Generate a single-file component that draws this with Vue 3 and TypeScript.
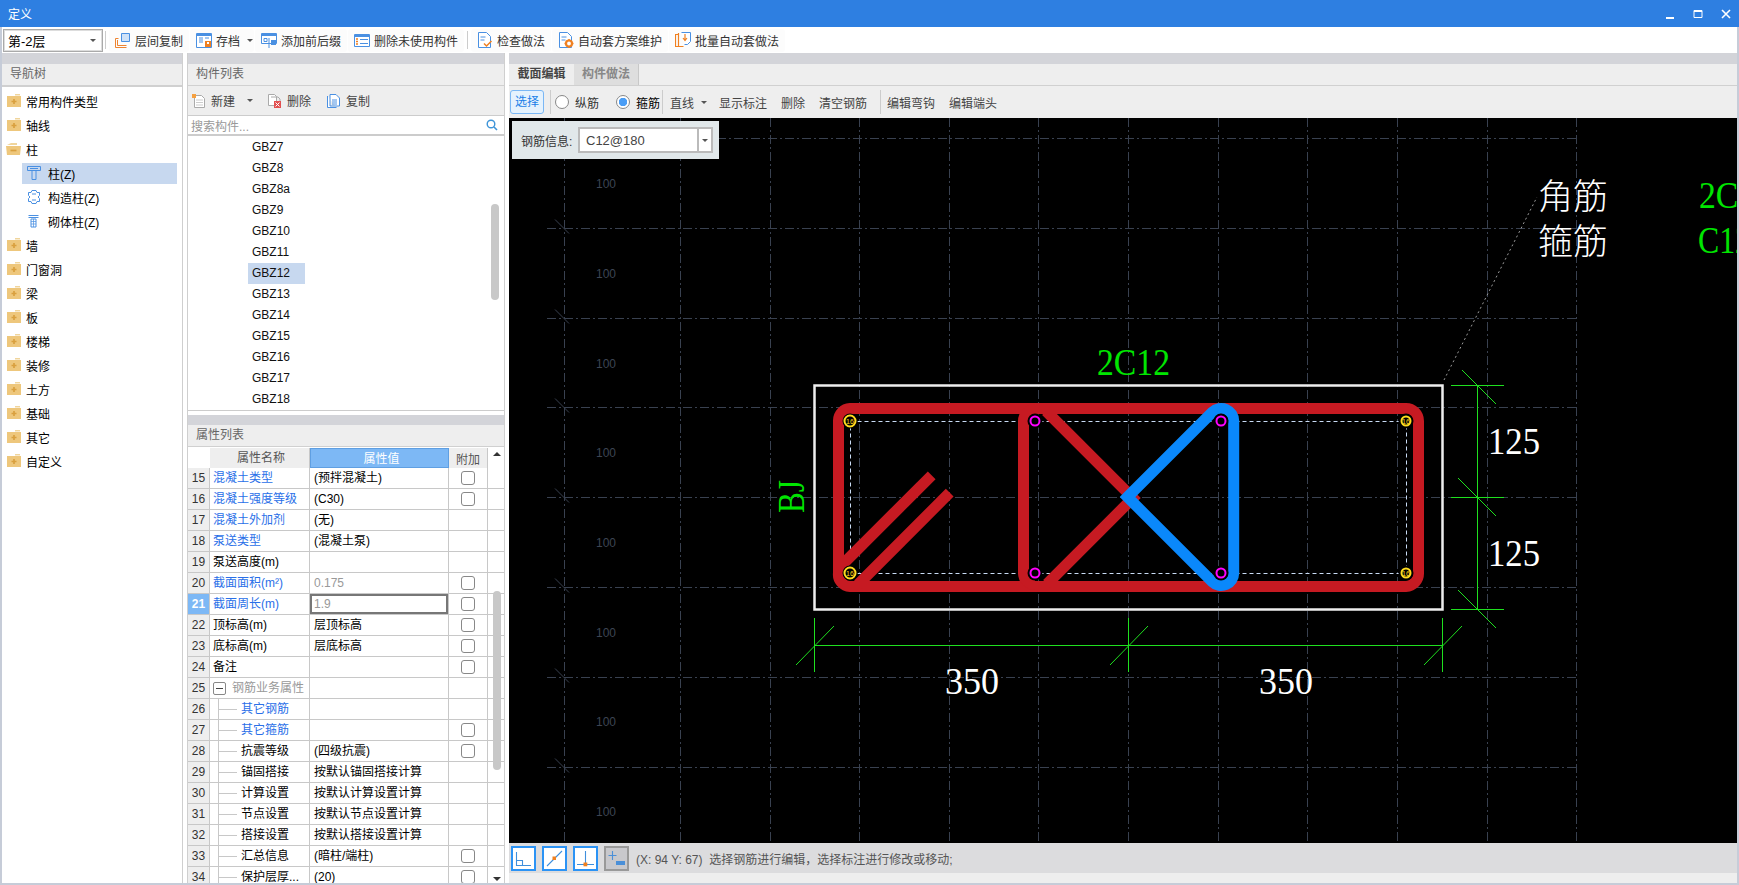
<template>
  <div class="app">
    <!-- Title bar -->
    <header class="titlebar">
      <span class="title">定义</span>
      <div class="win-ctrl">
        <svg width="12" height="12" viewBox="0 0 12 12"><rect x="2" y="9" width="8" height="2" fill="#fff" /></svg>
        <svg width="12" height="12" viewBox="0 0 12 12"><path d="M2 2.500h8v7H2z" fill="none" stroke="#fff" stroke-width="1" /><rect x="2" y="2" width="8" height="2" fill="#fff" /></svg>
        <svg width="12" height="12" viewBox="0 0 12 12"><path d="M2 2l8 8M10 2l-8 8" stroke="#fff" stroke-width="1.600" /></svg>
      </div>
    </header>

    <div class="main">
      <!-- Top toolbar -->
      <div class="toolbar">
        <div class="floor-select">
          <span>第-2层</span>
          <i class="caret"></i>
        </div>
        <span class="tb-sep first"></span>
        <button class="tb-btn">
          <svg class="icon" viewBox="0 0 16 16"><path d="M6.500 1.500h8v8h-8z" fill="#cfe2f8" stroke="#4a90e2" /><path d="M.5 15.500v-9h3M2.500 13.500h9M.5 15.500h11M2.500 13.500V8" fill="none" stroke="#ee8430" /></svg>
          层间复制
        </button>
        <button class="tb-btn with-caret">
          <svg class="icon" viewBox="0 0 16 16"><path d="M.5 1.500h15v14H.5z" fill="#fff" stroke="#4a90e2" /><path d="M1 2h14v2H1z" fill="#4a90e2" /><path d="M3 6h4M3 8h4M3 10h4M9 6h4" stroke="#4a90e2" /><rect x="9" y="9" width="6" height="6" fill="#f08020" /><rect x="11" y="10" width="2" height="2" fill="#fff" /></svg>
          存档
          <i class="caret"></i>
        </button>
        <button class="tb-btn">
          <svg class="icon" viewBox="0 0 16 16"><path d="M.5 1.500h15v10H.5z" fill="#fff" stroke="#4a90e2" /><path d="M1 2h14v2H1z" fill="#4a90e2" /><path d="M3 6.500h3v3H3z" fill="#fff" stroke="#4a90e2" /><rect x="10" y="8" width="5" height="5" fill="#4a90e2" /><path d="M8 6v10" stroke="#4a90e2" /></svg>
          添加前后缀
        </button>
        <button class="tb-btn">
          <svg class="icon" viewBox="0 0 16 16"><path d="M.5 2.500h15v12H.5z" fill="#fff" stroke="#4a90e2" /><path d="M1 3h14v2H1z" fill="#4a90e2" /><path d="M2 7h2M2 9.500h2M2 12h2" stroke="#f08020" stroke-width="1.500" /><path d="M6 7.500h8M6 11.500h8" stroke="#4a90e2" /></svg>
          删除未使用构件
        </button>
        <span class="tb-sep"></span>
        <button class="tb-btn">
          <svg class="icon" viewBox="0 0 16 16"><path d="M1.500.5h8l4 4v11h-12z" fill="#fff" stroke="#4a90e2" /><path d="M3.500 5h5M3.500 8h4" stroke="#4a90e2" /><path d="M7 11.500l2.500 2.500 5-5" fill="none" stroke="#f08020" stroke-width="1.500" /></svg>
          检查做法
        </button>
        <button class="tb-btn">
          <svg class="icon" viewBox="0 0 16 16"><path d="M1.500.5h8l4 4v11h-12z" fill="#fff" stroke="#4a90e2" /><path d="M3.500 5h5M3.500 8h4" stroke="#4a90e2" /><circle cx="11" cy="11.500" r="3" fill="#fff" stroke="#f08020" stroke-width="2.200" /><path d="M11 7v2M11 14v2M6.500 11.500h2M13.500 11.500h2" stroke="#f08020" stroke-width="1.500" /></svg>
          自动套方案维护
        </button>
        <button class="tb-btn">
          <svg class="icon" viewBox="0 0 16 16"><path d="M3.500 2.500H.5v12h3M3.500 1v13.500h5" fill="none" stroke="#f08020" stroke-width="1.200" /><path d="M6.500.5h9v9l-3 3h-3" fill="#fff" stroke="#4a90e2" /><path d="M10 2v6M8 6l2 2.500L12 6" fill="none" stroke="#f08020" stroke-width="1.200" /></svg>
          批量自动套做法
        </button>
      </div>

      <div class="panels">
        <!-- Navigation tree -->
        <aside class="nav">
          <div class="strip"></div>
          <div class="panel-head">导航树</div>
          <ul class="tree">
            <li v-for="item in navItems" :key="item.label" class="tree-row" :class="{ child: item.child, selected: item.selected }">
              <svg v-if="item.icon === 'closed'" class="folder" viewBox="0 0 14 14"><path d="M8 0h5v1.500H8z" fill="#f0d59c" /><rect y="2" width="14" height="11" fill="#eec77c" /><path d="M4.500 7.500h5M7 5v5" stroke="#d9a03f" stroke-width="1.700" /></svg>
              <svg v-else-if="item.icon === 'open'" class="folder open" viewBox="0 0 16 14"><path d="M1 3l4-2h6v2z" fill="#f0d59c" /><path d="M0 4h15l-1 9H1z" fill="#eec77c" /><path d="M4.500 8.500h6" stroke="#d9a03f" stroke-width="1.700" /></svg>
              <svg v-else-if="item.icon === 'col'" class="leaf" viewBox="0 0 14 14"><path d="M.5.5h13v4h-13zM3 2.500h8M5 4.500v9h4v-9" fill="none" stroke="#4a90e2" /></svg>
              <svg v-else-if="item.icon === 'gz'" class="leaf" viewBox="0 0 14 14"><path d="M5 .5h4l1 2h2.500v3L11 7l1.500 1.500v3H10l-1 2H5l-1-2H1.500v-3L3 7 1.500 5.500v-3H4z" fill="none" stroke="#4a90e2" /><path d="M5 4h4M5 10h4" stroke="#4a90e2" /></svg>
              <svg v-else-if="item.icon === 'qt'" class="leaf" viewBox="0 0 14 14"><path d="M1.500 1.500h10M1.500 3.500h10M4 5h5v8H4z" fill="none" stroke="#4a90e2" /><path d="M4 7.500h5M4 10h5M6.500 5v8" stroke="#4a90e2" stroke-width=".7" /></svg>
              <span>{{ item.label }}</span>
            </li>
          </ul>
        </aside>

        <!-- Component list + property list -->
        <section class="middle">
          <div class="strip"></div>
          <div class="panel-head">构件列表</div>
          <div class="list-tools">
            <span class="lt-btn new">
              <svg class="lt-icon" viewBox="0 0 14 14"><path d="M2.500 1.500h7l3 3v9h-10z" fill="#fff" stroke="#aaa" /><path d="M4 6h7M4 8.500h7M4 11h7" stroke="#ccc" /><rect width="4" height="4" fill="#f5a040" /></svg>
              新建<i class="caret btn-caret"></i>
            </span>
            <span class="lt-btn del">
              <svg class="lt-icon" viewBox="0 0 14 14"><path d="M.5.5h6l2 2v9h-8z" fill="#fff" stroke="#aaa" /><path d="M3 3h7l2 2v3" fill="none" stroke="#aaa" /><rect x="6" y="7" width="7" height="7" fill="#e25050" /><path d="M7.500 8.500l4 4M11.500 8.500l-4 4" stroke="#fff" /></svg>
              删除
            </span>
            <span class="lt-btn">
              <svg class="lt-icon" viewBox="0 0 14 14"><path d="M.5 2v11.500h9M3 .5h6l3.500 3.500v8H3z" fill="#fff" stroke="#4a90e2" /><path d="M5 6h5M5 8h5M5 10h5" stroke="#4a90e2" /></svg>
              复制
            </span>
          </div>
          <div class="search">
            <span>搜索构件...</span>
            <svg width="12" height="12" viewBox="0 0 12 12"><circle cx="5" cy="5" r="3.800" fill="none" stroke="#3d94d8" stroke-width="1.400" /><path d="M8 8l3 3" stroke="#3d94d8" stroke-width="1.600" /></svg>
          </div>
          <div class="comp-list">
            <div v-for="name in components" :key="name" class="comp-row">
              <span :class="{ picked: name === 'GBZ12' }">{{ name }}</span>
            </div>
            <span class="list-thumb"></span>
          </div>

          <div class="strip second"></div>
          <div class="panel-head">属性列表</div>
          <div class="prop-table">
            <div class="prop-head">
              <span class="cell-no blank"></span>
              <span class="cell-name head">属性名称</span>
              <span class="cell-val head active">属性值</span>
              <span class="cell-add head">附加</span>
            </div>
            <div v-for="row in props" :key="row.no" class="prop-row" :class="{ current: row.no === 21 }">
              <span class="cell-no">{{ row.no }}</span>
              <span class="cell-name" :class="{ link: row.link, sub: row.sub, group: row.group }">
                <i v-if="row.group" class="minus"></i>
                <i v-if="row.sub" class="branch"></i>
                {{ row.name }}
              </span>
              <span class="cell-val" :class="{ muted: row.muted }">{{ row.value }}</span>
              <span class="cell-add"><i v-if="row.check" class="check"></i></span>
            </div>
            <div class="prop-scroll">
              <i class="arrow up"></i>
              <span class="prop-thumb"></span>
              <i class="arrow down"></i>
            </div>
          </div>
        </section>

        <!-- Section editor -->
        <section class="editor">
          <div class="strip"></div>
          <div class="tabs">
            <span class="tab active">截面编辑</span>
            <span class="tab">构件做法</span>
          </div>
          <div class="edit-tools">
            <span class="select-btn">选择</span>
            <span class="et-sep"></span>
            <span class="radio"></span><span class="et-label">纵筋</span>
            <span class="radio on"></span><span class="et-label tight">箍筋</span>
            <span class="et-sep near"></span>
            <span class="et-item line">直线<i class="caret btn-caret"></i></span>
            <span class="et-item">显示标注</span>
            <span class="et-item">删除</span>
            <span class="et-item">清空钢筋</span>
            <span class="et-sep wide"></span>
            <span class="et-item">编辑弯钩</span>
            <span class="et-item">编辑端头</span>
          </div>

          <div class="canvas">
            <svg class="drawing" width="1229" height="725" viewBox="509 118 1229 725">
              <!-- grid -->
              <g stroke="#394150" stroke-width="1" stroke-dasharray="9 3 2 3" fill="none">
                <line v-for="x in gridX" :key="'x' + x" :x1="x" y1="118" :x2="x" y2="843" />
                <line v-for="y in gridY" :key="'y' + y" x1="547" :y1="y" x2="1577" :y2="y" />
              </g>
              <g stroke="#394150" stroke-width="1">
                <line v-for="y in gridY.slice(1)" :key="'t' + y" x1="555" :y1="y - 9" x2="569" :y2="y + 5" />
              </g>
              <text v-for="y in gridLabels" :key="'l' + y" x="606" :y="y + 5" class="grid-label">100</text>

              <!-- section outline -->
              <rect x="814.500" y="385.500" width="628" height="224" fill="none" stroke="#eeeeee" stroke-width="2.500" />

              <!-- inner dashed line -->
              <rect x="850.500" y="421.500" width="556" height="152" fill="none" stroke="#c9dcf5" stroke-dasharray="4 3" />

              <!-- stirrups -->
              <g fill="none" stroke="#c61a22" stroke-width="11">
                <path d="M850 408.500H1406A12.500 12.500 0 0 1 1418.500 421V573A13 13 0 0 1 1406 586.500H850A12 12 0 0 1 838.500 573V421A12 12 0 0 1 850 408.500Z" />
                <path d="M931.700 475.300L838 569" />
                <path d="M949.700 492.700L858 584.500" />
                <path d="M1023.500 573V421A11.500 11.500 0 0 1 1035 409.500" />
                <path d="M1023.500 573A11.500 11.500 0 0 0 1035 584.500" />
                <path d="M1046 411L1133 498L1047 584" />
              </g>
              <path d="M1127.500 497L1212.500 412A12.500 12.500 0 0 1 1233.700 421V573A12.500 12.500 0 0 1 1212.500 582Z" fill="none" stroke="#0a88fb" stroke-width="11" stroke-linejoin="miter" stroke-miterlimit="4" />

              <!-- rebars -->
              <g v-for="b in rebars" :key="b.x + '-' + b.y">
                <circle :cx="b.x" :cy="b.y" r="7.500" fill="#000" />
                <circle :cx="b.x" :cy="b.y" :r="b.r" fill="#000" :stroke="b.color" stroke-width="2" />
                <text :x="b.x" :y="b.y + 2.500" class="bar-text" :fill="b.color">{{ b.text }}</text>
              </g>

              <!-- dimensions -->
              <g stroke="#1fe01f" stroke-width="1" fill="none">
                <path d="M1477.500 385V609M1451 385.500H1504M1451 497.500H1504M1451 609.500H1504" />
                <path d="M1462 370L1496 404M1458 478L1496 516M1458 590L1496 628" />
                <path d="M814 645.500H1442M814.500 618V672M1128.500 618V672M1442.500 618V672" />
                <path d="M796 665L834 626M1110 665L1148 626M1424 665L1462 626" />
              </g>

              <!-- leader -->
              <line x1="1444" y1="380" x2="1537" y2="197" stroke="#9a9a9a" stroke-dasharray="2 3" />

              <text x="1097" y="375" class="cad green" textLength="73" lengthAdjust="spacingAndGlyphs">2C12</text>
              <text transform="translate(804 513) rotate(-90)" class="cad green" textLength="33" lengthAdjust="spacingAndGlyphs">BJ</text>
              <text x="945" y="694" class="cad white" textLength="54" lengthAdjust="spacingAndGlyphs">350</text>
              <text x="1259" y="694" class="cad white" textLength="54" lengthAdjust="spacingAndGlyphs">350</text>
              <text x="1488" y="454" class="cad white" textLength="52" lengthAdjust="spacingAndGlyphs">125</text>
              <text x="1488" y="566" class="cad white" textLength="52" lengthAdjust="spacingAndGlyphs">125</text>
              <text x="1538" y="209" class="cad-cn">角筋</text>
              <text x="1538" y="254" class="cad-cn">箍筋</text>
              <text x="1699" y="208" class="cad green" textLength="73" lengthAdjust="spacingAndGlyphs">2C12</text>
              <text x="1698" y="253" class="cad green" textLength="130" lengthAdjust="spacingAndGlyphs">C12@180</text>
            </svg>

            <!-- rebar info box sits over the drawing -->
            <div class="info-box">
              <span class="info-label">钢筋信息:</span>
              <div class="combo">
                <span class="combo-text">C12@180</span>
                <span class="combo-arrow"><i class="caret"></i></span>
              </div>
            </div>
          </div>

          <div class="status">
            <span class="snap">
              <svg viewBox="0 0 21 21"><path d="M3.500 4v13.500H18M3.500 12.500h6v5" fill="none" stroke="#3f8fdc" stroke-width="1.100" /></svg>
            </span>
            <span class="snap">
              <svg viewBox="0 0 21 21"><path d="M3 18L18 3" stroke="#3f8fdc" stroke-width="1.100" /><rect x="8.500" y="8.500" width="3.500" height="3.500" fill="#f08020" /></svg>
            </span>
            <span class="snap">
              <svg viewBox="0 0 21 21"><path d="M2 16.500h17M10.500 3v13" stroke="#3f8fdc" stroke-width="1.100" /><rect x="8.500" y="14.500" width="3.800" height="3.800" fill="#f08020" /></svg>
            </span>
            <span class="snap off">
              <svg viewBox="0 0 21 21"><path d="M6.500 3v9M2.500 7.500h8" stroke="#4a8fd8" stroke-width="1.100" /><rect x="10" y="13" width="9" height="4" fill="#4a8fd8" /></svg>
            </span>
            <span class="status-text">(X: 94 Y: 67)&nbsp; 选择钢筋进行编辑，选择标注进行修改或移动;</span>
          </div>
          <div class="foot"></div>
        </section>
      </div>
    </div>
  </div>
</template>

<script setup lang="ts">
interface NavItem {
  label: string
  icon: string
  child?: boolean
  selected?: boolean
}

interface PropRow {
  no: number
  name: string
  value?: string
  link?: boolean
  check?: boolean
  muted?: boolean
  sub?: boolean
  group?: boolean
}

const navItems: NavItem[] = [
  { label: '常用构件类型', icon: 'closed' },
  { label: '轴线', icon: 'closed' },
  { label: '柱', icon: 'open' },
  { label: '柱(Z)', icon: 'col', child: true, selected: true },
  { label: '构造柱(Z)', icon: 'gz', child: true },
  { label: '砌体柱(Z)', icon: 'qt', child: true },
  { label: '墙', icon: 'closed' },
  { label: '门窗洞', icon: 'closed' },
  { label: '梁', icon: 'closed' },
  { label: '板', icon: 'closed' },
  { label: '楼梯', icon: 'closed' },
  { label: '装修', icon: 'closed' },
  { label: '土方', icon: 'closed' },
  { label: '基础', icon: 'closed' },
  { label: '其它', icon: 'closed' },
  { label: '自定义', icon: 'closed' }
]

const components = [
  'GBZ7', 'GBZ8', 'GBZ8a', 'GBZ9', 'GBZ10', 'GBZ11', 'GBZ12',
  'GBZ13', 'GBZ14', 'GBZ15', 'GBZ16', 'GBZ17', 'GBZ18'
]

const props: PropRow[] = [
  { no: 15, name: '混凝土类型', value: '(预拌混凝土)', link: true, check: true },
  { no: 16, name: '混凝土强度等级', value: '(C30)', link: true, check: true },
  { no: 17, name: '混凝土外加剂', value: '(无)', link: true },
  { no: 18, name: '泵送类型', value: '(混凝土泵)', link: true },
  { no: 19, name: '泵送高度(m)' },
  { no: 20, name: '截面面积(m²)', value: '0.175', link: true, check: true, muted: true },
  { no: 21, name: '截面周长(m)', value: '1.9', link: true, check: true, muted: true },
  { no: 22, name: '顶标高(m)', value: '层顶标高', check: true },
  { no: 23, name: '底标高(m)', value: '层底标高', check: true },
  { no: 24, name: '备注', check: true },
  { no: 25, name: '钢筋业务属性', group: true },
  { no: 26, name: '其它钢筋', link: true, sub: true },
  { no: 27, name: '其它箍筋', link: true, sub: true, check: true },
  { no: 28, name: '抗震等级', value: '(四级抗震)', sub: true, check: true },
  { no: 29, name: '锚固搭接', value: '按默认锚固搭接计算', sub: true },
  { no: 30, name: '计算设置', value: '按默认计算设置计算', sub: true },
  { no: 31, name: '节点设置', value: '按默认节点设置计算', sub: true },
  { no: 32, name: '搭接设置', value: '按默认搭接设置计算', sub: true },
  { no: 33, name: '汇总信息', value: '(暗柱/端柱)', sub: true, check: true },
  { no: 34, name: '保护层厚...', value: '(20)', sub: true, check: true }
]

const gridX = [564.5, 680.5, 770.5, 859.5, 949.5, 1038.5, 1128.5, 1218.5, 1307.5, 1397.5, 1487.5, 1576.5]
const gridY = [138.5, 228.5, 318.5, 407.5, 497.5, 587.5, 677.5, 767.5]
const gridLabels = [183, 273, 363, 452, 542, 632, 721, 811]

const YELLOW = '#ffdc1e'
const MAGENTA = '#ff00ff'
const rebars = [
  { x: 850, y: 421, r: 5.5, color: YELLOW, text: '16' },
  { x: 850, y: 573, r: 5.5, color: YELLOW, text: '16' },
  { x: 1406, y: 421, r: 4.5, color: YELLOW, text: '16' },
  { x: 1406, y: 573, r: 4.5, color: YELLOW, text: '16' },
  { x: 1035, y: 421, r: 4.5, color: MAGENTA, text: '' },
  { x: 1035, y: 573, r: 4.5, color: MAGENTA, text: '' },
  { x: 1221, y: 421, r: 4.5, color: MAGENTA, text: '' },
  { x: 1221, y: 573, r: 4.5, color: MAGENTA, text: '' }
]
</script>

<style scoped>
.app {
  width: 1739px;
  height: 885px;
  display: flex;
  flex-direction: column;
  overflow: hidden;
  font-family: "Liberation Sans", "Noto Sans CJK SC", sans-serif;
  font-size: 12px;
  color: #222;
  background: #fff;
}

/* Title bar */
.titlebar {
  height: 27px;
  flex: none;
  background: #2e7fe1;
  color: #fff;
  display: flex;
  align-items: center;
  justify-content: space-between;
  padding: 0 8px;
}

.win-ctrl {
  display: flex;
  gap: 16px;
  margin-right: -1px;
}

.main {
  flex: 1;
  min-height: 0;
  display: flex;
  flex-direction: column;
  border: 2px solid #c6ccd8;
  border-top: none;
}

/* Top toolbar */
.toolbar {
  height: 26px;
  flex: none;
  display: flex;
  align-items: center;
  padding-left: 1px;
  gap: 1px;
  background: #fff;
}

.floor-select {
  width: 100px;
  height: 23px;
  box-sizing: border-box;
  border: 1px solid #aaa;
  box-shadow: inset 0 0 0 1px #ddd;
  display: flex;
  align-items: center;
  justify-content: space-between;
  padding: 0 6px 0 4px;
  color: #000;
  font-size: 13px;
}

.caret {
  display: inline-block;
  width: 0;
  height: 0;
  border-left: 3px solid transparent;
  border-right: 3px solid transparent;
  border-top: 3px solid #555;
}

.tb-sep {
  width: 1px;
  height: 18px;
  background: #ccc;
  margin: 0 2px;
}

.tb-sep.first {
  margin: 0 2px 0 1px;
}

.tb-btn {
  height: 23px;
  display: flex;
  align-items: center;
  gap: 4px;
  padding: 0 6px;
  border: none;
  background: #fcfcfc;
  border-radius: 3px;
  font: inherit;
  color: #333;
}

.tb-btn.with-caret {
  padding-right: 1px;
}

.tb-btn.with-caret .caret {
  margin-left: 3px;
}

.icon {
  width: 16px;
  height: 16px;
}

.btn-caret {
  margin-left: 7px;
}

/* Panels */
.panels {
  flex: 1;
  min-height: 0;
  display: flex;
}

.strip {
  height: 11px;
  background: #d3d4d9;
  flex: none;
}

.strip.second {
  height: 10px;
  margin-top: 4px;
}

.panel-head {
  height: 21px;
  line-height: 21px;
  flex: none;
  padding-left: 8px;
  background: #eeeeee;
  border-bottom: 1px solid #d0d0d0;
  color: #666;
}

/* Navigation tree */
.nav {
  width: 181px;
  flex: none;
  border-right: 1px solid #cfcfcf;
  box-sizing: border-box;
  display: flex;
  flex-direction: column;
}

.nav .panel-head {
  border-bottom-width: 2px;
}

.tree {
  list-style: none;
  margin: 0;
  padding: 2px 0 0;
}

.tree-row {
  height: 24px;
  display: flex;
  align-items: center;
  gap: 5px;
  padding-left: 5px;
  color: #000;
  position: relative;
}

.tree-row.child {
  padding-left: 25px;
  gap: 7px;
}

.tree-row.selected::before {
  content: "";
  position: absolute;
  left: 20px;
  right: 5px;
  top: 2px;
  height: 21px;
  background: #c7d8ef;
}

.tree-row > * {
  position: relative;
}

.folder {
  width: 14px;
  height: 14px;
  flex: none;
}

.folder.open {
  width: 16px;
  margin: 0 -1px;
}

.leaf {
  width: 14px;
  height: 14px;
  flex: none;
}

/* Middle column */
.middle {
  width: 318px;
  flex: none;
  margin-left: 4px;
  box-sizing: border-box;
  border-left: 1px solid #cfcfcf;
  border-right: 1px solid #cfcfcf;
  display: flex;
  flex-direction: column;
}

.list-tools {
  height: 30px;
  flex: none;
  display: flex;
  align-items: center;
  background: #eeeeee;
  border-bottom: 1px solid #ccc;
  box-sizing: border-box;
  padding-left: 4px;
  color: #444;
}

.lt-btn {
  display: flex;
  align-items: center;
  gap: 5px;
  margin-right: 16px;
}

.lt-btn.new {
  margin-right: 15px;
}

.lt-icon {
  width: 14px;
  height: 14px;
}

.search {
  height: 20px;
  flex: none;
  box-sizing: border-box;
  display: flex;
  align-items: center;
  justify-content: space-between;
  padding: 0 6px 0 3px;
  color: #999;
  border-bottom: 2px solid #cccccc;
}

.comp-list {
  height: 275px;
  flex: none;
  box-sizing: border-box;
  padding-top: 1px;
  border-bottom: 1px solid #ccc;
  position: relative;
}

.comp-row {
  height: 21px;
  line-height: 21px;
  padding-left: 64px;
  color: #111;
}

.comp-row span {
  display: inline-block;
  width: 57px;
  margin-left: -4px;
  padding-left: 4px;
  box-sizing: border-box;
}

.comp-row .picked {
  background: #c7d8ef;
}

.list-thumb {
  position: absolute;
  right: 5px;
  top: 68px;
  width: 8px;
  height: 96px;
  border-radius: 4px;
  background: #c8c8c8;
}

/* Property table */
.prop-table {
  flex: 1;
  min-height: 0;
  overflow: hidden;
  position: relative;
}

.prop-head,
.prop-row {
  display: flex;
  height: 21px;
  box-sizing: border-box;
}

.prop-head {
  height: 20px;
  margin: 1px 0 0;
}

.prop-row {
  border-bottom: 1px solid #c8c8c8;
}

.cell-no {
  width: 22px;
  flex: none;
  text-align: center;
  line-height: 20px;
  background: #eeeeee;
  border-right: 1px solid #c8c8c8;
  box-sizing: border-box;
  color: #333;
}

.cell-no.blank {
  background: #fff;
  border-right: none;
}

.cell-name {
  width: 100px;
  flex: none;
  box-sizing: border-box;
  padding-left: 3px;
  line-height: 20px;
  color: #000;
  border-right: 1px solid #c8c8c8;
  display: flex;
  align-items: center;
  white-space: nowrap;
}

.cell-val {
  width: 139px;
  flex: none;
  box-sizing: border-box;
  padding-left: 4px;
  line-height: 20px;
  color: #000;
  border-right: 1px solid #c8c8c8;
  white-space: nowrap;
}

.cell-add {
  width: 39px;
  flex: none;
  box-sizing: border-box;
  border-right: 1px solid #c8c8c8;
  display: flex;
  align-items: center;
  justify-content: center;
}

.head {
  background: #eeeeee;
  color: #555;
  justify-content: center;
  text-align: center;
}

.head.active {
  background: #7db8f5;
  color: #fff;
  border: 1px solid #5f9fe2;
}

.link {
  color: #2a6fe8;
}

.muted {
  color: #999;
}

.group {
  color: #999;
}

.minus {
  width: 13px;
  height: 13px;
  box-sizing: border-box;
  border: 1px solid #888;
  border-radius: 2px;
  margin-right: 6px;
  background: linear-gradient(#444, #444) center / 7px 1px no-repeat;
  flex: none;
}

.cell-name.sub {
  padding-left: 31px;
  position: relative;
}

.branch {
  position: absolute;
  left: 8px;
  top: 0;
  bottom: -1px;
  width: 18px;
  border-left: 1px solid #c8c8c8;
  background: linear-gradient(#c8c8c8, #c8c8c8) 0 10px / 18px 1px no-repeat;
}

.check {
  width: 14px;
  height: 14px;
  box-sizing: border-box;
  border: 1px solid #888;
  border-radius: 3px;
  background: #fff;
  margin-right: 1px;
}

.current .cell-no {
  background: #7db8f5;
  color: #fff;
  font-weight: bold;
}

.current .cell-val {
  box-shadow: inset 0 0 0 2px #777;
}

.prop-scroll {
  position: absolute;
  left: 300px;
  top: 0;
  bottom: 0;
  width: 17px;
}

.arrow {
  position: absolute;
  left: 5px;
  width: 0;
  height: 0;
  border-left: 4px solid transparent;
  border-right: 4px solid transparent;
}

.arrow.up {
  top: 5px;
  border-bottom: 4px solid #333;
}

.arrow.down {
  bottom: 2px;
  border-top: 4px solid #333;
}

.prop-thumb {
  position: absolute;
  left: 5px;
  top: 144px;
  width: 8px;
  height: 179px;
  border-radius: 4px;
  background: #c8c8c8;
}

/* Section editor */
.editor {
  flex: 1;
  min-width: 0;
  margin-left: 4px;
  display: flex;
  flex-direction: column;
}

.tabs {
  height: 22px;
  flex: none;
  display: flex;
  background: #eeeeee;
  border-bottom: 1px solid #d0d0d0;
  box-sizing: border-box;
}

.tab {
  width: 65px;
  text-align: center;
  line-height: 21px;
  font-weight: bold;
  color: #888;
  background: #dedede;
  border-right: 1px solid #c8c8c8;
  box-sizing: border-box;
}

.tab.active {
  background: #eeeeee;
  color: #444;
  border-right: none;
}

.edit-tools {
  height: 32px;
  flex: none;
  display: flex;
  align-items: center;
  background: #eeeeee;
  padding-left: 1px;
  color: #444;
}

.select-btn {
  width: 34px;
  height: 24px;
  line-height: 22px;
  box-sizing: border-box;
  text-align: center;
  border: 1px solid #7ab7f5;
  border-radius: 3px;
  background: #e5f2fd;
  color: #1a7fe8;
}

.et-sep {
  width: 1px;
  height: 24px;
  background: #ccc;
  margin: 0 3px 0 6px;
}

.et-sep.near {
  margin: 0 7px 0 2px;
}

.et-sep.wide {
  margin: 0 6px 0 -1px;
}

.radio {
  width: 14px;
  height: 14px;
  box-sizing: border-box;
  border: 1px solid #888;
  border-radius: 50%;
  background: #fff;
  margin-left: 1px;
}

.radio.on {
  background: radial-gradient(circle, #4a9df5 0 4px, #fff 4.500px);
}

.et-label {
  margin: 0 16px 0 6px;
  color: #333;
}

.et-label.tight {
  margin-right: 0;
  color: #000;
}

.et-item {
  margin-right: 14px;
  white-space: nowrap;
  display: flex;
  align-items: center;
}

.et-item.line {
  margin-right: 12px;
}

.canvas {
  height: 725px;
  flex: none;
  position: relative;
  overflow: hidden;
  background: #000;
}

.drawing {
  display: block;
}

.grid-label {
  fill: #3d4553;
  font-size: 12px;
  text-anchor: middle;
}

.bar-text {
  font-size: 7px;
  text-anchor: middle;
}

.cad {
  font-family: "Liberation Serif", serif;
  font-size: 37px;
}

.cad-cn {
  font-family: "Noto Sans CJK SC", sans-serif;
  font-size: 35px;
  font-weight: 300;
  fill: #fff;
}

.green {
  fill: #00e600;
}

.white {
  fill: #fff;
}

/* Rebar info box */
.info-box {
  position: absolute;
  left: 3px;
  top: 3px;
  width: 207px;
  height: 38px;
  background: #e1e8ea;
  display: flex;
  align-items: center;
  padding-left: 9px;
  box-sizing: border-box;
  color: #333;
}

.info-label {
  width: 57px;
  flex: none;
}

.combo {
  width: 135px;
  height: 26px;
  box-sizing: border-box;
  border: 2px solid #bbb;
  background: #fff;
  display: flex;
  align-items: center;
  justify-content: space-between;
}

.combo-text {
  padding-left: 6px;
  font-size: 13px;
  color: #444;
}

.combo-arrow {
  width: 14px;
  height: 22px;
  border-left: 2px solid #bbb;
  display: flex;
  align-items: center;
  justify-content: center;
  box-sizing: border-box;
}

/* Status bar */
.status {
  height: 30px;
  flex: none;
  background: #dcdcde;
  display: flex;
  align-items: center;
  padding-left: 2px;
  gap: 6px;
  color: #555;
}

.snap {
  width: 25px;
  height: 25px;
  box-sizing: border-box;
  border: 2px solid #2b93f5;
  background: #fff;
  display: flex;
}

.snap svg {
  width: 21px;
  height: 21px;
}

.snap.off {
  border-color: #999;
  background: #c8c8cc;
}

.status-text {
  margin-left: 1px;
  white-space: pre;
}

.foot {
  height: 10px;
  flex: none;
  background: #eeeeee;
}
</style>

<style>
html,
body {
  margin: 0;
  overflow: hidden;
}
</style>
